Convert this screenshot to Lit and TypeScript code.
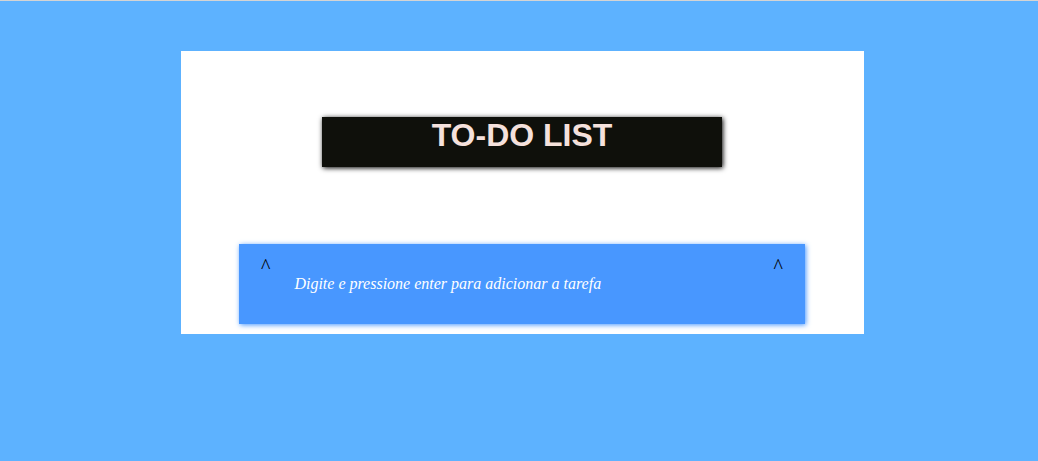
import { LitElement, html, css } from "lit";
import { customElement, state } from "lit/decorators.js";

@customElement("app-root")
export class AppRoot extends LitElement {
  static styles = css`
    :host {
      display: block;
    }
    .page {
      box-sizing: border-box;
      min-height: 100vh;
      padding: 50px 0 50px 7px;
      border-top: 1px solid #d4d4d4;
      background: #5db2ff;
    }
    .card {
      box-sizing: border-box;
      max-width: 683px;
      margin: 0 auto;
      padding: 66px 59px 10px 58px;
      background: #fff;
    }
    .title {
      box-sizing: border-box;
      max-width: 400px;
      min-height: 50px;
      margin: 0 auto 77px;
      background: #0f100b;
      box-shadow: 1px 1px 5px #000;
      color: #f5e1dc;
      font: bold 32px/36px "Liberation Sans", Arial, sans-serif;
      text-align: center;
    }
    .task {
      box-sizing: border-box;
      display: flex;
      justify-content: space-between;
      align-items: flex-start;
      min-height: 80px;
      padding: 10px 22px;
      background: #4897ff;
      box-shadow: 1px 1px 5px #4897ff;
    }
    .toggle {
      padding: 0;
      border: 0;
      background: none;
      color: #000;
      font: 20px/24px "Liberation Serif", "Times New Roman", serif;
      cursor: pointer;
    }
    .entry {
      flex: 1;
      min-width: 0;
      margin: 18px 24px 0;
      padding: 0;
      border: 0;
      outline: 0;
      background: none;
      color: #fff;
      font: italic 16px/24px "Liberation Serif", "Times New Roman", serif;
    }
    .entry::placeholder {
      color: #fff;
      opacity: 1;
    }
    .tasks {
      margin: 20px 0;
      padding: 0 20px;
      font: 16px/24px "Liberation Serif", "Times New Roman", serif;
    }
  `;

  @state() private tasks: string[] = [];
  @state() private open = true;

  private toggle = () => {
    this.open = !this.open;
  };

  private add(event: KeyboardEvent) {
    const input = event.target as HTMLInputElement;
    const text = input.value.trim();
    if (event.key !== "Enter" || !text) return;
    this.tasks = [...this.tasks, text];
    input.value = "";
  }

  render() {
    return html`
      <main class="page">
        <section class="card">
          <h1 class="title">TO-DO LIST</h1>
          <div class="task">
            <button class="toggle" aria-label="Mostrar tarefas" @click=${this.toggle}>^</button>
            <input
              class="entry"
              type="text"
              aria-label="Nova tarefa"
              placeholder="Digite e pressione enter para adicionar a tarefa"
              @keydown=${this.add}
            />
            <button class="toggle" aria-label="Ocultar tarefas" @click=${this.toggle}>^</button>
          </div>
          ${this.open && this.tasks.length
            ? html`<ul class="tasks">${this.tasks.map((task) => html`<li>${task}</li>`)}</ul>`
            : ""}
        </section>
      </main>
    `;
  }
}
